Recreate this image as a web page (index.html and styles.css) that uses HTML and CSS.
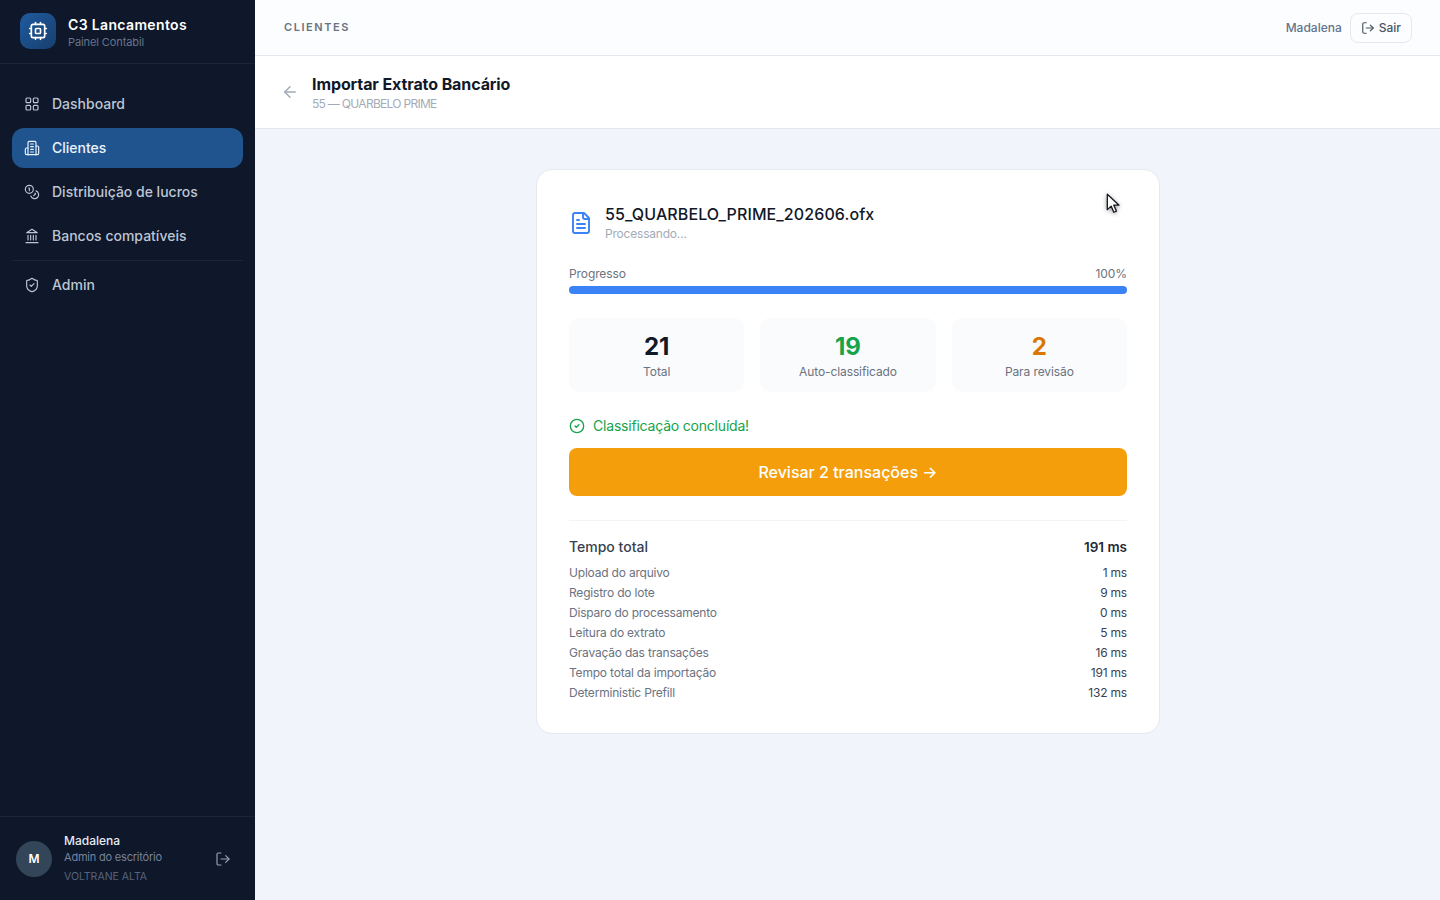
FILE: index.html
```html
<!DOCTYPE html>
<html lang="pt-BR">
<head>
  <meta charset="UTF-8" />
  <meta name="viewport" content="width=device-width, initial-scale=1.0" />
  <title>Importar Extrato Bancário</title>
  <link rel="stylesheet" href="styles.css">
</head>
<body>
  <aside class="sidebar">
    <div class="brand">
      <div class="brand-logo">
        <svg class="icon-logo" viewBox="0 0 24 24"><rect x="4" y="4" width="16" height="16" rx="2"/><rect x="9" y="9" width="6" height="6" rx="1"/><path d="M15 2v2M15 20v2M2 15h2M2 9h2M20 15h2M20 9h2M9 2v2M9 20v2"/></svg>
      </div>
      <div>
        <div class="brand-name">C3 Lancamentos</div>
        <div class="brand-sub">Painel Contabil</div>
      </div>
    </div>

    <nav class="nav">
      <a class="nav-item">
        <svg class="icon" viewBox="0 0 24 24"><rect x="3" y="3" width="7" height="7" rx="1.5"/><rect x="14" y="3" width="7" height="7" rx="1.5"/><rect x="14" y="14" width="7" height="7" rx="1.5"/><rect x="3" y="14" width="7" height="7" rx="1.5"/></svg>
        Dashboard
      </a>
      <a class="nav-item active">
        <svg class="icon" viewBox="0 0 24 24"><path d="M6 22V4a2 2 0 0 1 2-2h8a2 2 0 0 1 2 2v18Z"/><path d="M6 12H4a2 2 0 0 0-2 2v6a2 2 0 0 0 2 2h2"/><path d="M18 9h2a2 2 0 0 1 2 2v9a2 2 0 0 1-2 2h-2"/><path d="M10 6h4M10 10h4M10 14h4M10 18h4"/></svg>
        Clientes
      </a>
      <a class="nav-item">
        <svg class="icon" viewBox="0 0 24 24"><circle cx="8" cy="8" r="6"/><path d="M18.09 10.37A6 6 0 1 1 10.34 18"/><path d="M7 6h1v4"/><path d="m16.71 13.88.7.71-2.82 2.82"/></svg>
        Distribuição de lucros
      </a>
      <a class="nav-item">
        <svg class="icon" viewBox="0 0 24 24"><path d="M3 22h18"/><path d="M6 18v-7M10 18v-7M14 18v-7M18 18v-7"/><path d="M12 2l8 5H4Z"/></svg>
        Bancos compatíveis
      </a>
      <div class="nav-sep"></div>
      <a class="nav-item">
        <svg class="icon" viewBox="0 0 24 24"><path d="M20 13c0 5-3.5 7.5-7.66 8.95a1 1 0 0 1-.67-.01C7.5 20.5 4 18 4 13V6a1 1 0 0 1 1-1c2 0 4.5-1.2 6.24-2.72a1.17 1.17 0 0 1 1.52 0C14.51 3.81 17 5 19 5a1 1 0 0 1 1 1z"/><path d="m9 12 2 2 4-4"/></svg>
        Admin
      </a>
    </nav>

    <div class="user">
      <div class="avatar">M</div>
      <div class="user-info">
        <div class="user-name">Madalena</div>
        <div class="user-role">Admin do escritório</div>
        <div class="user-org">VOLTRANE ALTA</div>
      </div>
      <svg class="icon user-exit" viewBox="0 0 24 24"><path d="M9 21H5a2 2 0 0 1-2-2V5a2 2 0 0 1 2-2h4"/><path d="m16 17 5-5-5-5"/><path d="M21 12H9"/></svg>
    </div>
  </aside>

  <div class="content">
    <header class="topbar">
      <span class="crumb">CLIENTES</span>
      <div class="topbar-right">
        <span class="topbar-user">Madalena</span>
        <button class="btn-exit">
          <svg class="icon-sm" viewBox="0 0 24 24"><path d="M9 21H5a2 2 0 0 1-2-2V5a2 2 0 0 1 2-2h4"/><path d="m16 17 5-5-5-5"/><path d="M21 12H9"/></svg>
          Sair
        </button>
      </div>
    </header>

    <div class="page-head">
      <svg class="icon-back" viewBox="0 0 24 24"><path d="m12 19-7-7 7-7"/><path d="M19 12H5"/></svg>
      <div>
        <h1>Importar Extrato Bancário</h1>
        <p>55 — QUARBELO PRIME</p>
      </div>
    </div>

    <main class="main">
      <section class="card">
        <div class="file">
          <svg class="icon-file" viewBox="0 0 24 24"><path d="M15 2H6a2 2 0 0 0-2 2v16a2 2 0 0 0 2 2h12a2 2 0 0 0 2-2V7Z"/><path d="M14 2v4a2 2 0 0 0 2 2h4"/><path d="M10 9H8M16 13H8M16 17H8"/></svg>
          <div>
            <div class="file-name">55_QUARBELO_PRIME_202606.ofx</div>
            <div class="file-status">Processando...</div>
          </div>
        </div>

        <div class="progress-labels"><span>Progresso</span><span>100%</span></div>
        <div class="progress"><div class="progress-fill"></div></div>

        <div class="stats">
          <div class="stat"><strong>21</strong><span>Total</span></div>
          <div class="stat"><strong class="green">19</strong><span>Auto-classificado</span></div>
          <div class="stat"><strong class="orange">2</strong><span>Para revisão</span></div>
        </div>

        <div class="done">
          <svg class="icon-done" viewBox="0 0 24 24"><circle cx="12" cy="12" r="10"/><path d="m9 12 2 2 4-4"/></svg>
          Classificação concluída!
        </div>
        <button class="btn-review">Revisar 2 transações →</button>

        <div class="times">
          <div class="time-total"><span>Tempo total</span><b>191 ms</b></div>
          <div class="time-row"><span>Upload do arquivo</span><span>1 ms</span></div>
          <div class="time-row"><span>Registro do lote</span><span>9 ms</span></div>
          <div class="time-row"><span>Disparo do processamento</span><span>0 ms</span></div>
          <div class="time-row"><span>Leitura do extrato</span><span>5 ms</span></div>
          <div class="time-row"><span>Gravação das transações</span><span>16 ms</span></div>
          <div class="time-row"><span>Tempo total da importação</span><span>191 ms</span></div>
          <div class="time-row"><span>Deterministic Prefill</span><span>132 ms</span></div>
        </div>
      </section>
    </main>
  </div>

  <svg class="cursor" viewBox="0 0 16 24"><path d="M1.5 1.5v17.5l4.4-4 3 7 3-1.3-3-6.8h6Z"/></svg>
</body>
</html>
```

FILE: styles.css
```css
* {
  box-sizing: border-box;
}

body {
  margin: 0;
  height: 100vh;
  display: flex;
  overflow: hidden;
  font-family: Inter, "Noto Sans", sans-serif;
  background: #f1f5fb;
  color: #111827;
}

svg {
  fill: none;
  stroke: currentColor;
  stroke-width: 2;
  stroke-linecap: round;
  stroke-linejoin: round;
  flex-shrink: 0;
}

.sidebar {
  width: 255px;
  flex-shrink: 0;
  display: flex;
  flex-direction: column;
  background: #0f172a;
}

.brand {
  height: 64px;
  display: flex;
  align-items: center;
  gap: 12px;
  padding: 0 20px 1px;
  border-bottom: 1px solid #1c2538;
}

.brand-logo {
  width: 36px;
  height: 36px;
  border-radius: 10px;
  display: flex;
  align-items: center;
  justify-content: center;
  background: linear-gradient(135deg, #1f5a9e, #17406f);
  color: #fff;
}

.icon-logo {
  width: 20px;
  height: 20px;
}

.brand-name {
  font-size: 14px;
  line-height: 18px;
  font-weight: 600;
  letter-spacing: 0.35px;
  color: #fff;
  margin-top: 3px;
}

.brand-sub {
  font-size: 11px;
  line-height: 15px;
  margin-top: 1px;
  letter-spacing: -0.1px;
  color: #67748a;
}

.nav {
  flex: 1;
  padding: 20px 12px 0;
  display: flex;
  flex-direction: column;
  gap: 4px;
}

.nav-item {
  height: 40px;
  display: flex;
  align-items: center;
  gap: 12px;
  padding: 0 12px 1px;
  border-radius: 12px;
  font-size: 14px;
  font-weight: 500;
  color: #bcc6d5;
}

.nav-item.active {
  background: #20548f;
  color: #eaf2fd;
}

.icon {
  width: 16px;
  height: 16px;
  stroke-width: 1.75;
}

.nav-sep {
  height: 1px;
  background: #1c2538;
}

.user {
  height: 84px;
  display: flex;
  align-items: center;
  padding: 0 24px 0 16px;
  border-top: 1px solid #1c2538;
}

.avatar {
  width: 36px;
  height: 36px;
  border-radius: 50%;
  margin-right: 12px;
  display: flex;
  align-items: center;
  justify-content: center;
  background: #334558;
  color: #fff;
  font-size: 12px;
  font-weight: 600;
}

.user-info {
  flex: 1;
}

.user-name {
  font-size: 12px;
  line-height: 16px;
  font-weight: 500;
  color: #e5eaf1;
}

.user-role {
  font-size: 11px;
  line-height: 16px;
  letter-spacing: -0.2px;
  color: #76839a;
}

.user-org {
  font-size: 10.5px;
  line-height: 16px;
  margin-top: 4px;
  margin-bottom: -1px;
  color: #56637a;
}

.user-exit {
  color: #94a3b8;
}

.content {
  flex: 1;
  min-width: 0;
  display: flex;
  flex-direction: column;
}

.topbar {
  height: 56px;
  display: flex;
  align-items: center;
  justify-content: space-between;
  padding: 0 28px 0 29px;
  background: #fbfdff;
  border-bottom: 1px solid #e5e9ef;
}

.crumb {
  font-size: 11px;
  line-height: 14px;
  margin-bottom: 2px;
  font-weight: 600;
  letter-spacing: 1.55px;
  color: #6b7280;
}

.topbar-right {
  display: flex;
  align-items: center;
  gap: 8px;
}

.topbar-user {
  font-size: 12px;
  font-weight: 500;
  color: #64748b;
}

.btn-exit {
  height: 30px;
  display: flex;
  align-items: center;
  gap: 4px;
  padding: 0 10px;
  border: 1px solid #e5e9ef;
  border-radius: 8px;
  background: #fbfdff;
  font-family: inherit;
  font-size: 12px;
  font-weight: 500;
  color: #4b5563;
}

.icon-sm {
  width: 14px;
  height: 14px;
}

.page-head {
  height: 73px;
  display: flex;
  align-items: center;
  gap: 13px;
  padding: 0 26px;
  background: #fff;
  border-bottom: 1px solid #e3e8ef;
}

.icon-back {
  width: 18px;
  height: 18px;
  margin-bottom: 1px;
  color: #a3abb8;
}

h1 {
  margin: 0;
  font-size: 16px;
  line-height: 22px;
  font-weight: 700;
  letter-spacing: -0.1px;
  color: #111827;
}

.page-head p {
  margin: 1px 0 0;
  font-size: 12px;
  line-height: 16px;
  letter-spacing: -0.7px;
  color: #a3abb8;
}

.main {
  flex: 1;
  display: flex;
  justify-content: center;
  align-items: flex-start;
  padding-top: 40px;
}

.card {
  width: 624px;
  padding: 33px 32px 30px;
  background: #fff;
  border: 1px solid #e6eaf0;
  border-radius: 16px;
  margin-left: 1px;
}

.file {
  display: flex;
  align-items: center;
  gap: 12px;
  margin-bottom: 24px;
}

.icon-file {
  width: 24px;
  height: 24px;
  stroke-width: 1.9;
  color: #3b82f6;
}

.file-name {
  font-size: 16px;
  line-height: 22px;
  font-weight: 500;
  letter-spacing: 0.1px;
  color: #111827;
}

.file-status {
  font-size: 12px;
  line-height: 16px;
  margin-top: 1px;
  letter-spacing: -0.2px;
  color: #a3abb8;
}

.progress-labels {
  display: flex;
  justify-content: space-between;
  font-size: 12px;
  line-height: 16px;
  letter-spacing: -0.1px;
  color: #6b7280;
  margin-bottom: 4px;
}

.progress {
  height: 8px;
  border-radius: 4px;
  background: #e5e7eb;
  overflow: hidden;
}

.progress-fill {
  width: 100%;
  height: 100%;
  background: #3b82f6;
}

.stats {
  display: grid;
  grid-template-columns: repeat(3, 1fr);
  gap: 16px;
  margin-top: 24px;
}

.stat {
  height: 74px;
  border-radius: 10px;
  background: #f9fbfd;
  display: flex;
  flex-direction: column;
  align-items: center;
  justify-content: center;
}

.stat strong {
  font-size: 24px;
  line-height: 32px;
  font-weight: 700;
  color: #111827;
}

.stat strong.green {
  color: #16a34a;
}

.stat strong.orange {
  color: #d97706;
}

.stat span {
  font-size: 12px;
  line-height: 16px;
  margin-top: 1px;
  letter-spacing: -0.1px;
  color: #6b7280;
}

.done {
  display: flex;
  align-items: center;
  gap: 8px;
  margin-top: 24px;
  font-size: 14px;
  line-height: 20px;
  letter-spacing: -0.2px;
  color: #16a34a;
}

.icon-done {
  width: 16px;
  height: 16px;
}

.btn-review {
  width: 100%;
  height: 48px;
  margin-top: 12px;
  border: none;
  border-radius: 8px;
  background: #f59e0b;
  color: #fff;
  font-family: inherit;
  font-size: 16px;
  font-weight: 500;
}

.times {
  margin-top: 24px;
  padding-top: 16px;
  border-top: 1px solid #f1f3f6;
}

.time-total {
  display: flex;
  justify-content: space-between;
  font-size: 14px;
  line-height: 20px;
  font-weight: 500;
  color: #374151;
  margin-bottom: 6px;
}

.time-total b {
  font-weight: 600;
  color: #1f2937;
  font-size: 13.5px;
}

.time-row {
  display: flex;
  justify-content: space-between;
  font-size: 12px;
  line-height: 20px;
  letter-spacing: -0.2px;
  color: #6b7280;
}

.time-row span:last-child {
  color: #374151;
}

.cursor {
  position: absolute;
  left: 1106px;
  top: 193px;
  width: 14px;
  height: 21px;
  fill: #fff;
  stroke: #14181f;
  stroke-width: 1.5;
  filter: drop-shadow(0 1px 2px rgba(0, 0, 0, 0.4));
}
```
